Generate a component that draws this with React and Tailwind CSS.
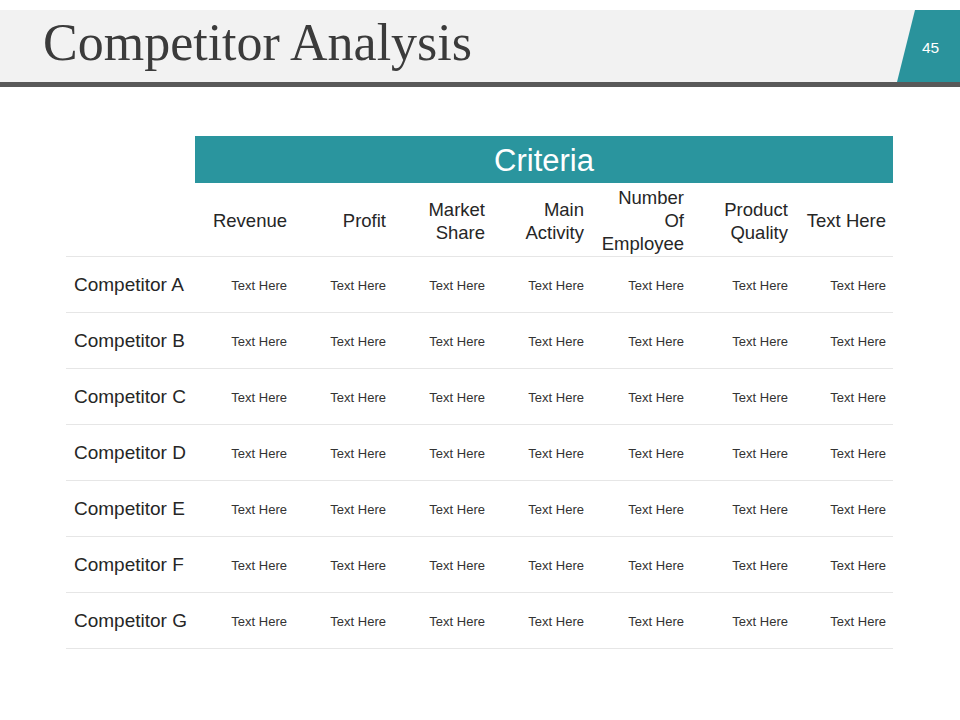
import React from 'react';

const criteria = [
    ['Revenue'],
    ['Profit'],
    ['Market', 'Share'],
    ['Main', 'Activity'],
    ['Number', 'Of', 'Employee'],
    ['Product', 'Quality'],
    ['Text Here'],
];

const competitors = ['A', 'B', 'C', 'D', 'E', 'F', 'G'];

const cellPad = ['pr-[8px]', 'pr-[8px]', 'pr-[8px]', 'pr-[8px]', 'pr-[8px]', 'pr-[8px]', 'pr-[7px]'];

function App() {
    return (
        <div className="w-[960px] h-[720px] bg-white overflow-hidden" style={{ fontFamily: '"Liberation Sans", Arial, sans-serif' }}>
            <div className="h-[10px]" />
            <header className="flex h-[72px] bg-[#f2f2f2]">
                <h1
                    className="flex-1 pl-[43px] pt-[3px] text-[52px] leading-[60px] text-[#3b3b3b]"
                    style={{ fontFamily: '"Liberation Serif", "DejaVu Serif", serif' }}
                >
                    Competitor Analysis
                </h1>
                <div className="w-[63px] h-full bg-[#2a939c] [clip-path:polygon(18px_0,100%_0,100%_100%,0_100%)] flex items-center pl-[25px] pt-[4px] text-[15.5px] text-white">
                    45
                </div>
            </header>
            <div className="h-[5px] bg-[#595959]" />

            <div className="ml-[66px] mt-[49px] w-[827px]">
                <div className="grid grid-cols-[129px_100px_99px_99px_99px_100px_104px_97px]">
                    <div />
                    <div className="col-span-7 h-[47px] pt-[4px] bg-[#2a959e] flex items-center justify-center text-[31px] text-white">
                        Criteria
                    </div>
                </div>

                <div className="grid grid-cols-[129px_100px_99px_99px_99px_100px_104px_97px] h-[74px] pt-[2px] border-b border-[#e6e6e6] text-[18.5px] leading-[23px] text-[#262626]">
                    <div />
                    {criteria.map((lines, i) => (
                        <div key={i} className={`flex flex-col items-end justify-center text-right ${cellPad[i]}`}>
                            {lines.map(l => <span key={l}>{l}</span>)}
                        </div>
                    ))}
                </div>

                {competitors.map(c => (
                    <div key={c} className="grid grid-cols-[129px_100px_99px_99px_99px_100px_104px_97px] h-[56px] pt-[2px] border-b border-[#e6e6e6] items-center">
                        <div className="pl-[8px] text-[19px] text-[#262626]">Competitor {c}</div>
                        {criteria.map((_, i) => (
                            <div key={i} className={`text-right text-[13px] text-[#333333] ${cellPad[i]}`}>Text Here</div>
                        ))}
                    </div>
                ))}
            </div>
        </div>
    );
}

export default App;
